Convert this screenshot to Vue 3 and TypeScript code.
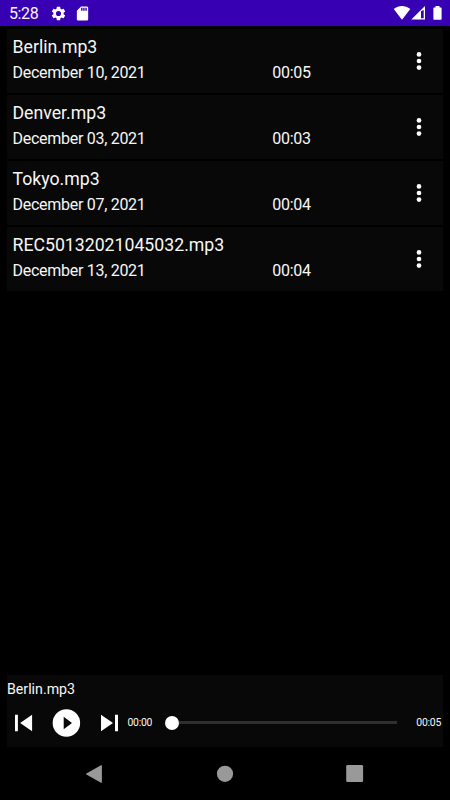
<script setup lang="ts">
interface Recording {
  name: string
  date: string
  duration: string
}

const recordings: Recording[] = [
  { name: 'Berlin.mp3', date: 'December 10, 2021', duration: '00:05' },
  { name: 'Denver.mp3', date: 'December 03, 2021', duration: '00:03' },
  { name: 'Tokyo.mp3', date: 'December 07, 2021', duration: '00:04' },
  { name: 'REC50132021045032.mp3', date: 'December 13, 2021', duration: '00:04' },
]

const current = recordings[0]
</script>

<template>
  <div class="screen">
    <header class="status">
      <span class="clock">5:28</span>
      <svg class="gear" width="17" height="17" viewBox="0 0 24 24" fill="#fff">
        <path d="M19.14 12.94c.04-.3.06-.61.06-.94s-.02-.64-.07-.94l2.03-1.58a.49.49 0 0 0 .12-.61l-1.92-3.32a.49.49 0 0 0-.59-.22l-2.39.96a7 7 0 0 0-1.62-.94l-.36-2.54a.48.48 0 0 0-.48-.41h-3.84a.48.48 0 0 0-.47.41l-.36 2.54c-.59.24-1.13.57-1.62.94l-2.39-.96a.48.48 0 0 0-.59.22L2.74 8.87a.48.48 0 0 0 .12.61l2.03 1.58c-.05.3-.09.63-.09.94s.02.64.07.94l-2.03 1.58a.49.49 0 0 0-.12.61l1.92 3.32c.12.22.37.29.59.22l2.39-.96c.5.38 1.03.7 1.62.94l.36 2.54c.05.24.24.41.48.41h3.84c.24 0 .44-.17.47-.41l.36-2.54c.59-.24 1.13-.56 1.62-.94l2.39.96c.22.08.47 0 .59-.22l1.92-3.32a.48.48 0 0 0-.12-.61zM12 15.6a3.6 3.6 0 1 1 0-7.2 3.6 3.6 0 0 1 0 7.2z" />
      </svg>
      <svg class="sd" width="17" height="17" viewBox="0 0 24 24" fill="#fff">
        <path d="M18 2h-8L4.02 8 4 20c0 1.100.9 2 2 2h12c1.100 0 2-.9 2-2V4c0-1.100-.9-2-2-2zm-6 6h-2V4h2zm3 0h-2V4h2zm3 0h-2V4h2z" />
      </svg>
      <svg class="signals" width="56" height="26" viewBox="390 0 56 26" fill="#fff">
        <path d="M393.700 9.100C396.300 7 399 5.900 402 5.900s5.700 1.100 8.300 3.200L402 19.700z" />
        <path fill-rule="evenodd" d="M425 5.900v13.700h-13.700zM421 11.300v6.900h2.700V10z" />
        <path d="M434.100 7.600h1.400V6h4v1.600h1.400q.7 0 .7.700v10.800q0 .7-.7.700h-6.800q-.7 0-.7-.7V8.300q0-.7.7-.7z" />
      </svg>
    </header>

    <main class="list">
      <article v-for="item in recordings" :key="item.name" class="row">
        <div class="info">
          <div class="name">{{ item.name }}</div>
          <div class="meta">
            <span class="date">{{ item.date }}</span>
            <span>{{ item.duration }}</span>
          </div>
        </div>
        <svg class="more" width="8" height="20" viewBox="0 0 8 20" fill="#fff">
          <circle cx="4" cy="3.400" r="2.350" />
          <circle cx="4" cy="10" r="2.350" />
          <circle cx="4" cy="16.600" r="2.350" />
        </svg>
      </article>
    </main>

    <section class="player">
      <div class="playing">{{ current.name }}</div>
      <div class="controls">
        <svg class="buttons" width="114" height="32" viewBox="7 706.700 114 32" fill="#fff">
          <path d="M15 714.400h2.900v16.600H15zM32.100 714.400v16.600l-12-8.300z" />
          <path fill-rule="evenodd" d="M66.400 709a13.750 13.750 0 1 0 0 27.500 13.750 13.750 0 0 0 0-27.500zM63.700 716.500v12.500l8.300-6.250z" />
          <path d="M101 714.400v16.600l12-8.300zM115 714.400h3v16.600h-3z" />
        </svg>
        <span class="elapsed">00:00</span>
        <div class="slider">
          <div class="thumb"></div>
          <div class="track"></div>
        </div>
        <span class="total">{{ current.duration }}</span>
      </div>
    </section>

    <nav class="nav">
      <svg width="450" height="53" viewBox="0 747 450 53" fill="#999">
        <path d="M101 765.300q.9-.5.900.5v16.400q0 1-.9.500L86.400 774.500q-.9-.5 0-1z" />
        <circle cx="225" cy="773.800" r="8.100" />
        <rect x="346.200" y="765.100" width="16.900" height="16.900" rx="1.200" />
      </svg>
    </nav>
  </div>
</template>

<style>
body {
  margin: 0;
  background: #000;
}
</style>

<style scoped>
.screen {
  width: 450px;
  height: 800px;
  display: flex;
  flex-direction: column;
  overflow: hidden;
  background: #000;
  color: #f7f7f7;
  font-family: Roboto, sans-serif;
}

svg {
  display: block;
  flex: none;
}

.status {
  height: 26.300px;
  flex: none;
  display: flex;
  align-items: center;
  box-sizing: border-box;
  padding: 0 4px 0 9px;
  background: #3700b3;
}

.clock {
  width: 40.800px;
  font-size: 16px;
  letter-spacing: -0.400px;
  line-height: 18px;
  padding-top: 2px;
}

.sd {
  margin-left: 7.500px;
}

.signals {
  margin-left: auto;
}

.list {
  flex: 1;
  display: flex;
  flex-direction: column;
  gap: 1.800px;
  padding: 2.700px 7px 0;
}

.row {
  height: 64.100px;
  display: flex;
  align-items: center;
  justify-content: space-between;
  box-sizing: border-box;
  padding: 0 20px 0 5.500px;
  background: #080808;
}

.name {
  font-size: 17.700px;
  line-height: 21px;
}

.meta {
  display: flex;
  margin-top: 6.200px;
  font-size: 16px;
  letter-spacing: -0.280px;
  line-height: 18px;
}

.date {
  width: 259.800px;
}

.info {
  padding-bottom: 2.400px;
}

.player {
  height: 72.300px;
  flex: none;
  box-sizing: border-box;
  margin: 0 7px;
  padding-top: 6px;
  background: #080808;
}

.playing {
  font-size: 14.200px;
  line-height: 17px;
}

.controls {
  display: flex;
  align-items: center;
  margin-top: 9px;
  font-size: 10.400px;
  letter-spacing: -0.250px;
  line-height: 12px;
}

.elapsed {
  width: 37px;
  margin-left: 6.500px;
}

.slider {
  width: 232px;
  display: flex;
  align-items: center;
}

.thumb {
  width: 14px;
  height: 14px;
  flex: none;
  border-radius: 50%;
  background: #fff;
}

.track {
  flex: 1;
  height: 2.500px;
  background: #2f2f2f;
}

.total {
  margin-left: auto;
  margin-right: 2px;
}

.nav {
  height: 53px;
  flex: none;
}
</style>
